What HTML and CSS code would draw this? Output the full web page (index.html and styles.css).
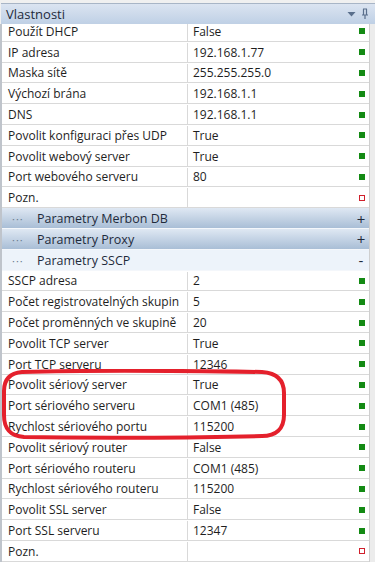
FILE: index.html
```html
<!DOCTYPE html>
<html>
<head>
  <title>Vlastnosti</title>
  <link rel="stylesheet" href="styles.css">
</head>
<body>
  <div class="panel">
    <header class="panel-header">
      <span>Vlastnosti</span>
      <span class="header-icons">
        <svg width="9" height="6" viewBox="0 0 9 6"><path d="M0.5 1 L8.5 1 L4.5 5.5 Z" fill="#5a6f8c"/></svg>
        <svg width="8" height="12" viewBox="0 0 8 12"><path d="M2 1 H6 M2.5 1 V7 H5.5 V1 M1 7 H7 M4 7 V11" stroke="#5a6f8c" stroke-width="1.2" fill="none"/></svg>
      </span>
    </header>
    <div class="grid-wrap">
      <div class="grid">
        <div class="row"><div class="name">Použít DHCP</div><div class="value">False</div><span class="mark"></span></div>
        <div class="row"><div class="name">IP adresa</div><div class="value">192.168.1.77</div><span class="mark"></span></div>
        <div class="row"><div class="name">Maska sítě</div><div class="value">255.255.255.0</div><span class="mark"></span></div>
        <div class="row"><div class="name">Výchozí brána</div><div class="value">192.168.1.1</div><span class="mark"></span></div>
        <div class="row"><div class="name">DNS</div><div class="value">192.168.1.1</div><span class="mark"></span></div>
        <div class="row"><div class="name">Povolit konfiguraci přes UDP</div><div class="value">True</div><span class="mark"></span></div>
        <div class="row"><div class="name">Povolit webový server</div><div class="value">True</div><span class="mark"></span></div>
        <div class="row"><div class="name">Port webového serveru</div><div class="value">80</div><span class="mark"></span></div>
        <div class="row"><div class="name">Pozn.</div><div class="value"></div><span class="mark empty"></span></div>
        <div class="row group"><span class="dots">···</span><span class="gname">Parametry Merbon DB</span><span class="toggle">+</span></div>
        <div class="row group"><span class="dots">···</span><span class="gname">Parametry Proxy</span><span class="toggle">+</span></div>
        <div class="row group open"><span class="dots">···</span><span class="gname">Parametry SSCP</span><span class="toggle">-</span></div>
        <div class="row"><div class="name">SSCP adresa</div><div class="value">2</div><span class="mark"></span></div>
        <div class="row"><div class="name">Počet registrovatelných skupin</div><div class="value">5</div><span class="mark"></span></div>
        <div class="row"><div class="name">Počet proměnných ve skupině</div><div class="value">20</div><span class="mark"></span></div>
        <div class="row"><div class="name">Povolit TCP server</div><div class="value">True</div><span class="mark"></span></div>
        <div class="row"><div class="name">Port TCP serveru</div><div class="value">12346</div><span class="mark"></span></div>
        <div class="row"><div class="name">Povolit sériový server</div><div class="value">True</div><span class="mark"></span></div>
        <div class="row"><div class="name">Port sériového serveru</div><div class="value">COM1 (485)</div><span class="mark"></span></div>
        <div class="row"><div class="name">Rychlost sériového portu</div><div class="value">115200</div><span class="mark"></span></div>
        <div class="row"><div class="name">Povolit sériový router</div><div class="value">False</div><span class="mark"></span></div>
        <div class="row"><div class="name">Port sériového routeru</div><div class="value">COM1 (485)</div><span class="mark"></span></div>
        <div class="row"><div class="name">Rychlost sériového routeru</div><div class="value">115200</div><span class="mark"></span></div>
        <div class="row"><div class="name">Povolit SSL server</div><div class="value">False</div><span class="mark"></span></div>
        <div class="row"><div class="name">Port SSL serveru</div><div class="value">12347</div><span class="mark"></span></div>
        <div class="row"><div class="name">Pozn.</div><div class="value"></div><span class="mark empty"></span></div>
      </div>
      <div class="scrollbar"></div>
    </div>
    <svg class="circle" width="290" height="72" viewBox="0 0 290 72">
      <path d="M22 3 C90 1 200 2 262 3 C278 4 284 12 284 24 L284 46 C284 60 276 67 262 67 C190 69 80 69 24 68 C10 67 4 60 4 46 L4 22 C4 10 10 4 22 3 Z" fill="none" stroke="#e4202c" stroke-width="4"/>
    </svg>
  </div>
</body>
</html>
```

FILE: styles.css
```css
body {
  margin: 0;
  background: #f0f0f0;
  font-family: "Open Sans", "Noto Sans", sans-serif;
  font-size: 12px;
  color: #1e1e1e;
}

.panel {
  position: relative;
  width: 375px;
  height: 562px;
  padding-top: 3px;
  box-sizing: border-box;
  overflow: hidden;
}

.panel-header {
  height: 21px;
  margin-left: 1px;
  padding: 0 6px 0 5px;
  border-top: 1px solid #a8b5c6;
  box-sizing: border-box;
  display: flex;
  align-items: center;
  justify-content: space-between;
  background: linear-gradient(#dbe4f1, #bfd0e5);
  font-size: 13px;
  color: #1e2b3c;
}

.header-icons {
  display: flex;
  align-items: center;
  gap: 5px;
}

.grid-wrap {
  display: flex;
  height: 538px;
  overflow: hidden;
  border-left: 2px solid #bfc4cb;
}

.grid {
  width: 367px;
  flex-shrink: 0;
  margin-top: -3px;
  background: #fff;
}

.scrollbar {
  flex: 1;
  border-left: 1px solid #cfcfcf;
  background: #ececec;
}

.row {
  height: 20.8px;
  box-sizing: border-box;
  border-bottom: 1px solid #d9d9d9;
  display: flex;
  align-items: center;
  padding-top: 1px;
}

.name {
  width: 179px;
  flex-shrink: 0;
  height: 100%;
  padding-left: 6px;
  border-right: 1px solid #d9d9d9;
  display: flex;
  align-items: center;
  white-space: nowrap;
}

.value {
  flex: 1;
  padding-left: 5px;
}

.mark {
  display: block;
  flex: 0 0 6px;
  height: 6px;
  margin-right: 4px;
  background: #138a13;
}

.mark.empty {
  box-sizing: border-box;
  background: #fff;
  border: 1.5px solid #d0202c;
}

.group {
  background: linear-gradient(#dfe8f3, #a9bed6);
  border-bottom: 1px solid #f4f7fb;
  color: #1e2b3c;
  font-size: 12.5px;
}

.group.open {
  background: #edf3fa;
}

.dots {
  width: 35px;
  flex-shrink: 0;
  padding-left: 10px;
  box-sizing: border-box;
  color: #6b7b8f;
  letter-spacing: 1px;
  font-size: 11px;
}

.gname {
  flex: 1;
}

.toggle {
  width: 12px;
  margin-right: 2px;
  font-size: 15px;
  text-align: center;
}

.circle {
  position: absolute;
  left: 0;
  top: 369px;
}
```
